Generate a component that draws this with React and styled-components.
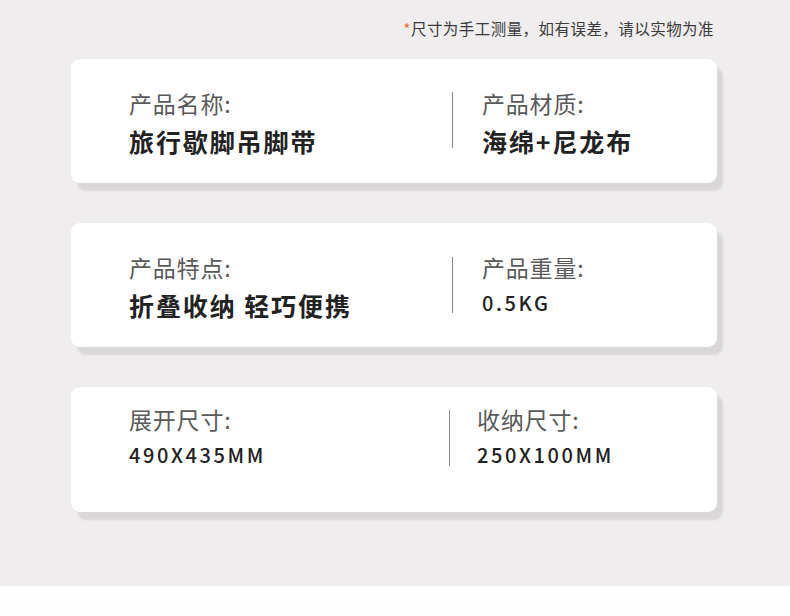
import React from "react";
import styled, { createGlobalStyle } from "styled-components";

const Global = createGlobalStyle`
  html, body { margin: 0; padding: 0; background: #fefefe; }
  body { font-family: "Noto Sans CJK SC", "Noto Sans", sans-serif; }
`;

const Page = styled.div`
  height: 586px;
  background: #efeded;
  box-sizing: border-box;
  padding-top: 17px;
`;

const Note = styled.div`
  text-align: right;
  padding-right: 76px;
  font-size: 15.5px;
  line-height: 22px;
  color: #3a3a3a;
  letter-spacing: 0.45px;
  span { color: #f2683c; }
`;

const List = styled.div`
  margin-top: 20px;
  display: flex;
  flex-direction: column;
  gap: 40px;
  padding-left: 71px;
`;

const Card = styled.div`
  width: 646px;
  height: ${(p) => p.$h}px;
  box-sizing: border-box;
  background: #ffffff;
  border-radius: 9px;
  box-shadow: 6px 8px 2px #d9d7d8;
  display: grid;
  grid-template-columns: ${(p) => p.$left}px 1px 1fr;
  align-items: start;
  padding: ${(p) => p.$top}px 0 0 58px;
`;

const Col = styled.div`
  display: flex;
  flex-direction: column;
  padding-left: ${(p) => p.$pl || 0}px;
`;

const Divider = styled.div`
  width: 1px;
  height: 56px;
  background: #8a8a8a;
  margin-top: ${(p) => p.$mt || 0}px;
`;

const Label = styled.div`
  font-size: 23px;
  line-height: 26px;
  color: #5a5a5a;
  letter-spacing: 0.8px;
`;

const Value = styled.div`
  margin-top: ${(p) => (p.$num ? 11 : 10)}px;
  font-size: ${(p) => (p.$num ? 20 : 25)}px;
  line-height: ${(p) => (p.$num ? 24 : 30)}px;
  font-weight: ${(p) => (p.$num ? 500 : 700)};
  letter-spacing: ${(p) => (p.$num ? 2.6 : 1.9)}px;
  color: #222222;
`;

const rows = [
  {
    h: 124, top: 31, left: 323, pl: 29, dmt: 2,
    a: ["产品名称:", "旅行歇脚吊脚带", false],
    b: ["产品材质:", "海绵+尼龙布", false],
  },
  {
    h: 124, top: 31, left: 323, pl: 29, dmt: 3,
    a: ["产品特点:", "折叠收纳 轻巧便携", false],
    b: ["产品重量:", "0.5KG", true],
  },
  {
    h: 125, top: 19, left: 320, pl: 27, dmt: 4,
    a: ["展开尺寸:", "490X435MM", true],
    b: ["收纳尺寸:", "250X100MM", true],
  },
];

export default function App() {
  return (
    <>
      <Global />
      <Page>
        <Note><span>*</span>尺寸为手工测量，如有误差，请以实物为准</Note>
        <List>
          {rows.map((r, i) => (
            <Card key={i} $h={r.h} $top={r.top} $left={r.left}>
              <Col>
                <Label>{r.a[0]}</Label>
                <Value $num={r.a[2]}>{r.a[1]}</Value>
              </Col>
              <Divider $mt={r.dmt} />
              <Col $pl={r.pl}>
                <Label>{r.b[0]}</Label>
                <Value $num={r.b[2]}>{r.b[1]}</Value>
              </Col>
            </Card>
          ))}
        </List>
      </Page>
    </>
  );
}
